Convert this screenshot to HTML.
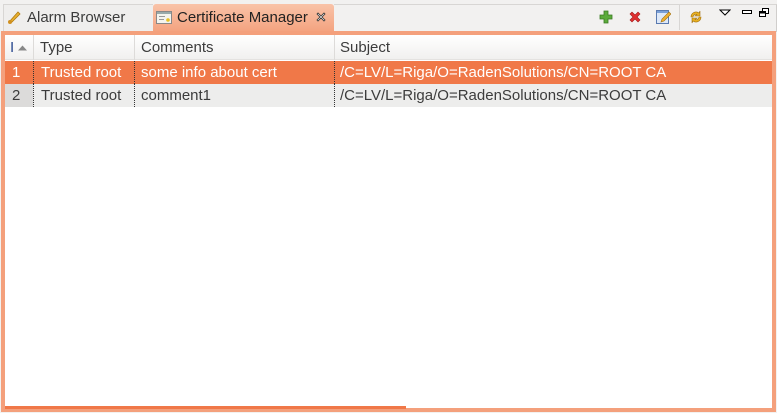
<!DOCTYPE html>
<html><head><meta charset="utf-8"><style>
*{margin:0;padding:0;box-sizing:border-box}
body{width:777px;height:413px;background:#f2f1f0;font-family:"Liberation Sans",sans-serif;font-size:15px;color:#3c3c3c;position:relative;overflow:hidden}
.abs{position:absolute}
.tab1{left:3px;top:4px;width:150px;height:29px;background:#efeeed;border:1px solid #d8d6d4;border-bottom:none;border-right:none}
.tab2{left:153px;top:4px;width:181px;height:30px;background:linear-gradient(#f9c3a8,#f3a07c);border-radius:3px 3px 0 0}
.frame{left:1px;top:31px;width:775px;height:381px;border:4px solid #f4a07c;background:#fff}
.tline{left:334px;top:4px;width:443px;height:28px;border-top:1px solid #d8d6d4;border-right:1px solid #d0cecc}
.t{position:absolute;top:0;line-height:23px;white-space:nowrap}
.hdr{left:5px;top:35px;width:767px;height:25px;background:linear-gradient(#fff,#f1f0ef);border-bottom:1px solid #e4e2e0}
.row{left:5px;width:767px;height:23px}
.vd{position:absolute;top:0;height:23px;border-left:1px dotted #333}
.hd{position:absolute;top:0;height:25px;border-left:1px solid #dddbd9}
</style></head><body>
<div class="abs tline"></div>
<div class="abs tab1"></div>
<div class="abs tab2"></div>
<svg class="abs" style="left:6px;top:9px" width="16" height="16" viewBox="0 0 16 16"><path d="M3 13 L12 3 L14 5 L5 14Z" fill="#e8b030" stroke="#b07a10" stroke-width="0.8"/><circle cx="4" cy="13" r="2" fill="#d09020"/></svg>
<div class="abs" style="left:27px;top:9px;font-size:15px;color:#3c3c3c">Alarm Browser</div>
<svg class="abs" style="left:156px;top:11px" width="16" height="13" viewBox="0 0 16 13"><rect x="0.5" y="0.5" width="15" height="12" fill="#f4f4ee" stroke="#888"/><rect x="1" y="1" width="14" height="2" fill="#9aa"/><rect x="3" y="5" width="6" height="1" fill="#999"/><rect x="3" y="8" width="5" height="1" fill="#999"/><circle cx="12" cy="9" r="1.8" fill="#e8c020"/></svg>
<div class="abs" style="left:177px;top:9px;font-size:15px;color:#222">Certificate Manager</div>
<svg class="abs" style="left:316px;top:12px" width="10" height="10" viewBox="0 0 10 10"><path d="M1 2L2 1 5 4 8 1 9 2 6 5 9 8 8 9 5 6 2 9 1 8 4 5z" fill="#fff" stroke="#333" stroke-width="0.8"/></svg>
<svg class="abs" style="left:599px;top:10px" width="14" height="14" viewBox="0 0 14 14"><path d="M5 1h4v4h4v4H9v4H5V9H1V5h4z" fill="#5cab3c" stroke="#3a7a22" stroke-width="0.8"/></svg>
<svg class="abs" style="left:628px;top:10px" width="14" height="14" viewBox="0 0 14 14"><path d="M2 4L4 2 7 5 10 2 12 4 9 7 12 10 10 12 7 9 4 12 2 10 5 7z" fill="#e03030" stroke="#a01818" stroke-width="0.6"/></svg>
<svg class="abs" style="left:655px;top:9px" width="16" height="16" viewBox="0 0 16 16"><rect x="1.5" y="1.5" width="12" height="13" fill="#dde8f8" stroke="#5a7ab0"/><rect x="2" y="2" width="11" height="2" fill="#7aa0d8"/><path d="M6 13l1-3 7-7 2 2-7 7z" fill="#f0b030" stroke="#a07010" stroke-width="0.6"/></svg>
<div class="abs" style="left:679px;top:4px;width:1px;height:26px;background:#d8d6d4"></div>
<svg class="abs" style="left:688px;top:9px" width="16" height="16" viewBox="0 0 16 16"><path d="M3 8a5 5 0 0 1 8-4l1-2v5H7l2-1.5A3 3 0 0 0 5 8z" fill="#e8b020" stroke="#a07010" stroke-width="0.6"/><path d="M13 8a5 5 0 0 1-8 4l-1 2V9h5l-2 1.5A3 3 0 0 0 11 8z" fill="#e8b020" stroke="#a07010" stroke-width="0.6"/></svg>
<svg class="abs" style="left:719px;top:9px" width="12" height="8"><path d="M1 1h10L6 6z" fill="#fff" stroke="#000"/></svg>
<svg class="abs" style="left:742px;top:9px" width="11" height="6"><rect x="0.5" y="1.5" width="9" height="3" fill="#fff" stroke="#000"/></svg>
<svg class="abs" style="left:759px;top:8px" width="10" height="10"><rect x="3.5" y="0.5" width="6" height="5" fill="#fff" stroke="#000"/><rect x="0.5" y="3.5" width="6" height="5" fill="#fff" stroke="#000"/><rect x="1" y="4" width="5" height="1.5" fill="#000"/></svg>
<div class="abs frame"></div>
<div class="abs hdr">
 <div class="t" style="left:5px;top:1px;color:#2a4a90">I</div>
 <svg class="abs" style="left:13px;top:10px" width="9" height="6"><path d="M0 5.5L4.5 0.5 9 5.5z" fill="#888"/></svg>
 <div class="hd" style="left:28px"></div><div class="t" style="left:35px;top:1px">Type</div>
 <div class="hd" style="left:129px"></div><div class="t" style="left:136px;top:1px">Comments</div>
 <div class="hd" style="left:329px"></div><div class="t" style="left:335px;top:1px">Subject</div>
</div>
<div class="abs row" style="top:61px;background:#f07848;color:#fff">
 <div class="t" style="left:7px">1</div>
 <div class="vd" style="left:28px"></div><div class="t" style="left:36px">Trusted root</div>
 <div class="vd" style="left:129px"></div><div class="t" style="left:136px">some info about cert</div>
 <div class="vd" style="left:329px"></div><div class="t" style="left:335px">/C=LV/L=Riga/O=RadenSolutions/CN=ROOT CA</div>
</div>
<div class="abs row" style="top:84px;background:#ededec;color:#3c3c3c">
 <div class="abs" style="left:0;top:0;width:28px;height:23px;background:#dcdbda"></div>
 <div class="t" style="left:7px">2</div>
 <div class="vd" style="left:28px"></div><div class="t" style="left:36px">Trusted root</div>
 <div class="vd" style="left:129px"></div><div class="t" style="left:136px">comment1</div>
 <div class="vd" style="left:329px"></div><div class="t" style="left:335px">/C=LV/L=Riga/O=RadenSolutions/CN=ROOT CA</div>
</div>
<div class="abs" style="left:5px;top:406px;width:401px;height:3px;background:#f07848"></div>
</body></html>
